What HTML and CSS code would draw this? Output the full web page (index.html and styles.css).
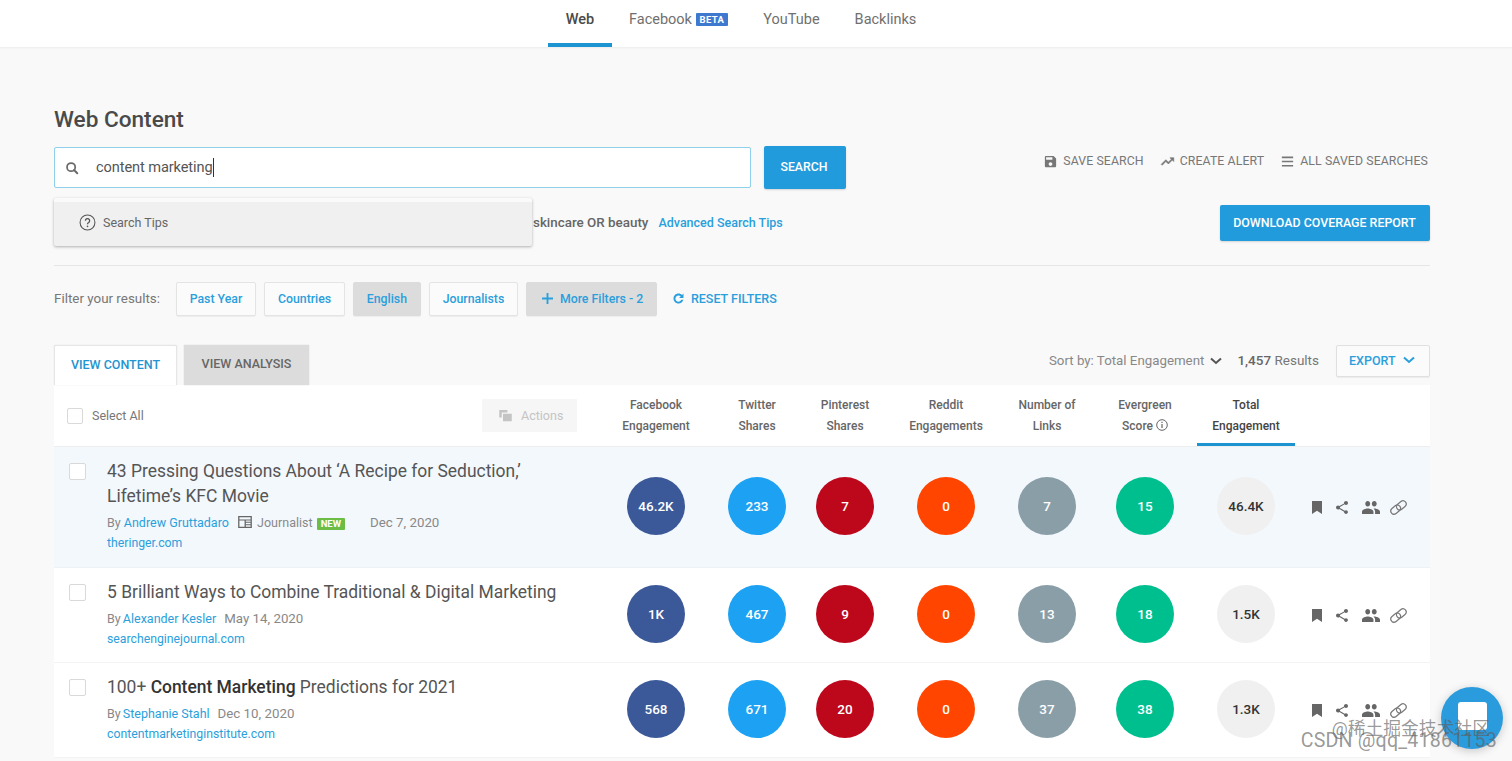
FILE: index.html
```html
<!DOCTYPE html>
<html lang="en">
<head>
<meta charset="utf-8">
<title>Web Content</title>
<link rel="stylesheet" href="styles.css">
</head>
<body>
<svg class="defs" width="0" height="0" aria-hidden="true">
  <symbol id="i-bookmark" viewBox="5 2 14 20" preserveAspectRatio="none"><path d="M5 2h14v20l-7-5-7 5z"/></symbol>
  <symbol id="i-share" viewBox="3 2 18 20" preserveAspectRatio="none"><path d="M18 16.08c-.76 0-1.44.3-1.96.77L8.91 12.7c.05-.23.09-.46.09-.7s-.04-.47-.09-.7l7.05-4.11c.54.5 1.25.81 2.04.81 1.66 0 3-1.34 3-3s-1.34-3-3-3-3 1.34-3 3c0 .24.04.47.09.7L8.04 9.81C7.5 9.31 6.79 9 6 9c-1.66 0-3 1.34-3 3s1.34 3 3 3c.79 0 1.5-.31 2.04-.81l7.12 4.16c-.05.21-.08.43-.08.65 0 1.61 1.31 2.92 2.92 2.92s2.92-1.31 2.92-2.92-1.31-2.92-2.92-2.92z"/></symbol>
  <symbol id="i-people" viewBox="1 5 22 14" preserveAspectRatio="none"><path d="M16 11c1.66 0 2.99-1.34 2.99-3S17.66 5 16 5c-1.66 0-3 1.34-3 3s1.34 3 3 3zm-8 0c1.66 0 2.99-1.34 2.99-3S9.66 5 8 5C6.34 5 5 6.34 5 8s1.34 3 3 3zm0 2c-2.33 0-7 1.17-7 3.5V19h14v-2.5c0-2.33-4.67-3.5-7-3.5zm8 0c-.29 0-.62.02-.97.05 1.16.84 1.97 1.97 1.97 3.45V19h6v-2.5c0-2.33-4.67-3.5-7-3.5z"/></symbol>
  <symbol id="i-link" viewBox="0 0 24 24"><g fill="none" stroke="currentColor" stroke-width="1.7"><rect x="0.5" y="10.5" width="15" height="9" rx="4.5" transform="rotate(-40 8 15)"/><rect x="8.5" y="4.5" width="15" height="9" rx="4.5" transform="rotate(-40 16 9)"/></g></symbol>
</svg>

<nav class="topnav">
  <a class="topnav-item is-active">Web</a>
  <a class="topnav-item">Facebook <span class="beta">BETA</span></a>
  <a class="topnav-item">YouTube</a>
  <a class="topnav-item">Backlinks</a>
</nav>

<main class="page">
  <h1 class="title">Web Content</h1>

  <section class="search-row">
    <div class="search-box">
      <svg class="search-icon" viewBox="0 0 24 24"><circle cx="10.5" cy="10.5" r="7" fill="none" stroke="currentColor" stroke-width="3"/><path d="M15.5 15.5 21 21" stroke="currentColor" stroke-width="3.4" stroke-linecap="round"/></svg>
      <span class="search-text">content marketing</span>
    </div>
    <a class="btn-primary btn-search">SEARCH</a>
    <div class="search-links">
      <a class="search-link"><svg class="ico-15" viewBox="0 0 24 24"><path d="M17 3H5c-1.11 0-2 .9-2 2v14c0 1.1.89 2 2 2h14c1.1 0 2-.9 2-2V7l-4-4zm-5 16c-1.66 0-3-1.34-3-3s1.34-3 3-3 3 1.34 3 3-1.34 3-3 3zm3-10H5V5h10v4z"/></svg>SAVE SEARCH</a>
      <a class="search-link"><svg class="ico-15" viewBox="0 0 24 24"><path d="M16 6l2.29 2.29-4.88 4.88-4-4L2 16.59 3.41 18l6-6 4 4 6.3-6.29L22 12V6z" stroke="currentColor"/></svg>CREATE ALERT</a>
      <a class="search-link"><svg class="ico-15" viewBox="0 0 24 24"><path d="M3 4h18v2.6H3zM3 10.7h18v2.6H3zM3 17.4h18V20H3z"/></svg>ALL SAVED SEARCHES</a>
    </div>
  </section>

  <section class="tips-row">
    <div class="tips-menu">
      <svg class="tips-icon" viewBox="0 0 24 24"><circle cx="12" cy="12" r="10.5" fill="none" stroke="currentColor" stroke-width="1.5"/><path d="M9 9.4a3 3 0 1 1 4.6 2.6c-1 .6-1.6 1.2-1.6 2.4" fill="none" stroke="currentColor" stroke-width="1.8"/><circle cx="12" cy="17.4" r="1.2" fill="currentColor"/></svg>
      <span>Search Tips</span>
    </div>
    <span class="tips-example">skincare OR beauty</span>
    <a class="tips-link">Advanced Search Tips</a>
    <a class="btn-primary btn-report">DOWNLOAD COVERAGE REPORT</a>
  </section>

  <section class="filters">
    <span class="filters-label">Filter your results:</span>
    <a class="chip">Past Year</a>
    <a class="chip">Countries</a>
    <a class="chip chip-on">English</a>
    <a class="chip">Journalists</a>
    <a class="chip chip-on chip-more"><svg class="plus" viewBox="0 0 12 12"><path d="M5 0h2v5h5v2H7v5H5V7H0V5h5z"/></svg>More Filters - 2</a>
    <a class="reset"><svg class="ico-15" viewBox="0 0 24 24"><path d="M17.65 6.35C16.2 4.9 14.21 4 12 4c-4.42 0-7.99 3.58-7.99 8s3.57 8 7.99 8c3.73 0 6.84-2.55 7.73-6h-3.2c-.82 1.6-2.5 3-4.53 3-2.76 0-5-2.24-5-5s2.24-5 5-5c1.4 0 2.6.6 3.5 1.5L13 11h7V4l-2.35 2.35z"/></svg>RESET FILTERS</a>
  </section>

  <section class="tabbar">
    <a class="tab tab-on">VIEW CONTENT</a>
    <a class="tab">VIEW ANALYSIS</a>
    <div class="sort">
      <span>Sort by: Total Engagement</span>
      <svg class="chev" viewBox="0 0 12 8"><path d="M1 1.5 6 6l5-4.5" fill="none" stroke="currentColor" stroke-width="2"/></svg>
      <span class="count"><b>1,457</b> Results</span>
      <a class="export">EXPORT<svg class="chev" viewBox="0 0 12 8"><path d="M1 1.5 6 6l5-4.5" fill="none" stroke="currentColor" stroke-width="2"/></svg></a>
    </div>
  </section>

  <section class="table">
    <div class="grid head">
      <div class="head-left">
        <span class="check"></span><span class="select-all">Select All</span>
        <span class="actions"><svg class="ico-15" viewBox="0 0 24 24"><path d="M2 3h13v4H6v8H2zM8 9h14v12H8z"/></svg>Actions</span>
      </div>
      <div class="hcell">Facebook<br>Engagement</div>
      <div class="hcell">Twitter<br>Shares</div>
      <div class="hcell">Pinterest<br>Shares</div>
      <div class="hcell">Reddit<br>Engagements</div>
      <div class="hcell">Number of<br>Links</div>
      <div class="hcell">Evergreen<br>Score <svg class="info" viewBox="0 0 12 12"><circle cx="6" cy="6" r="5.3" fill="none" stroke="currentColor"/><path d="M5.4 5h1.2v4H5.4zM5.4 2.8h1.2V4H5.4z"/></svg></div>
      <div class="hcell hcell-on">Total<br>Engagement</div>
    </div>

    <article class="grid row row-tall row-hi">
      <div class="main">
        <span class="check check-row"></span>
        <div>
          <h2 class="row-title">43 Pressing Questions About ‘A Recipe for Seduction,’<br>Lifetime’s KFC Movie</h2>
          <p class="meta">By <a class="lnk by">Andrew Gruttadaro</a>
            <svg class="news" viewBox="0 0 16 14"><path fill-rule="evenodd" d="M0 0h16v14H0zM1.5 1.5v2.5h13V1.5zM1.5 5.2v7.3h6V5.2zM9 5.2v1.6h5.5V5.2zM9 8v1.6h5.5V8zM9 10.8v1.7h5.5v-1.7z"/></svg>
            Journalist <span class="new">NEW</span><span class="date date-far">Dec 7, 2020</span></p>
          <a class="lnk domain">theringer.com</a>
        </div>
      </div>
      <div class="cell"><span class="dot fb">46.2K</span></div>
      <div class="cell"><span class="dot tw">233</span></div>
      <div class="cell"><span class="dot pi">7</span></div>
      <div class="cell"><span class="dot re">0</span></div>
      <div class="cell"><span class="dot li">7</span></div>
      <div class="cell"><span class="dot ev">15</span></div>
      <div class="cell cell-total"><span class="dot to">46.4K</span></div>
      <div class="tools"><svg class="t-mark"><use href="#i-bookmark"/></svg><svg class="t-share"><use href="#i-share"/></svg><svg class="t-people"><use href="#i-people"/></svg><svg class="t-link"><use href="#i-link"/></svg></div>
    </article>

    <article class="grid row">
      <div class="main">
        <span class="check check-row"></span>
        <div>
          <h2 class="row-title">5 Brilliant Ways to Combine Traditional &amp; Digital Marketing</h2>
          <p class="meta">By <a class="lnk">Alexander Kesler</a><span class="date">May 14, 2020</span></p>
          <a class="lnk domain">searchenginejournal.com</a>
        </div>
      </div>
      <div class="cell"><span class="dot fb">1K</span></div>
      <div class="cell"><span class="dot tw">467</span></div>
      <div class="cell"><span class="dot pi">9</span></div>
      <div class="cell"><span class="dot re">0</span></div>
      <div class="cell"><span class="dot li">13</span></div>
      <div class="cell"><span class="dot ev">18</span></div>
      <div class="cell cell-total"><span class="dot to">1.5K</span></div>
      <div class="tools"><svg class="t-mark"><use href="#i-bookmark"/></svg><svg class="t-share"><use href="#i-share"/></svg><svg class="t-people"><use href="#i-people"/></svg><svg class="t-link"><use href="#i-link"/></svg></div>
    </article>

    <article class="grid row">
      <div class="main">
        <span class="check check-row"></span>
        <div>
          <h2 class="row-title">100+ <b>Content Marketing</b> Predictions for 2021</h2>
          <p class="meta">By <a class="lnk">Stephanie Stahl</a><span class="date">Dec 10, 2020</span></p>
          <a class="lnk domain">contentmarketinginstitute.com</a>
        </div>
      </div>
      <div class="cell"><span class="dot fb">568</span></div>
      <div class="cell"><span class="dot tw">671</span></div>
      <div class="cell"><span class="dot pi">20</span></div>
      <div class="cell"><span class="dot re">0</span></div>
      <div class="cell"><span class="dot li">37</span></div>
      <div class="cell"><span class="dot ev">38</span></div>
      <div class="cell cell-total"><span class="dot to">1.3K</span></div>
      <div class="tools"><svg class="t-mark"><use href="#i-bookmark"/></svg><svg class="t-share"><use href="#i-share"/></svg><svg class="t-people"><use href="#i-people"/></svg><svg class="t-link"><use href="#i-link"/></svg></div>
    </article>
  </section>
</main>

<div class="chat"><span class="chat-box"></span></div>
<div class="watermark"><span class="wm-1">@稀土掘金技术社区</span><span class="wm-2">CSDN @qq_41861153</span></div>
</body>
</html>
```
FILE: styles.css
```css
* { box-sizing: border-box; }
html, body { margin: 0; height: 761px; overflow: hidden; }
body { background: #f9f9f9; font-family: Roboto, "Noto Sans CJK SC", sans-serif; color: #666; font-size: 13px; position: relative; }
a { color: inherit; text-decoration: none; }
.defs { position: absolute; }

.topnav { height: 47px; background: #fff; box-shadow: 0 1px 2px rgba(0,0,0,.06); display: flex; padding-left: 548px; font-size: 14.5px; color: #707070; }
.topnav-item { height: 47px; padding: 11px 0 0; margin-right: 35px; white-space: nowrap; }
.topnav-item.is-active { width: 64px; margin-right: 17px; text-align: center; color: #4a4a4a; font-weight: 500; border-bottom: 4px solid #1c94d2; }
.beta { display: inline-block; background: #3f78cf; color: #fff; font-size: 9.5px; font-weight: 700; line-height: 13px; padding: 0 4px; border-radius: 1px; vertical-align: 1px; letter-spacing: .35px; }

.page { padding: 0 82px 0 54px; }
.title { margin: 59px 0 0; font-size: 22.6px; line-height: 27px; font-weight: 500; color: #4a4a4a; }

.search-row { display: flex; align-items: center; margin-top: 13px; height: 43px; }
.search-box { width: 697px; height: 41px; background: #fff; border: 1px solid #8fd0ec; border-radius: 2px; display: flex; align-items: center; padding-left: 10px; font-size: 14.6px; color: #555; }
.search-icon { width: 14px; height: 14px; color: #6b6b6b; }
.search-text { margin-left: 17px; border-right: 1px solid #333; line-height: 19px; letter-spacing: -.1px; }
.btn-primary { background: #219bdb; color: #fff; font-weight: 500; border-radius: 2px; display: flex; align-items: center; justify-content: center; box-shadow: 0 1px 2px rgba(0,0,0,.15); }
.btn-search { width: 82px; height: 43px; margin-left: 13px; font-size: 12.3px; padding: 0 2px 1px 0; }
.search-links { margin-left: auto; margin-right: 2px; display: flex; gap: 16px; font-size: 12.3px; color: #777; height: 30px; margin-top: -13px; align-items: center; }
.search-link { display: flex; align-items: center; gap: 5px; white-space: nowrap; letter-spacing: .1px; }
.ico-15 { width: 15px; height: 15px; fill: currentColor; flex: none; }

.tips-row { position: relative; display: flex; align-items: center; height: 36px; margin-top: 16px; padding-left: 479px; font-weight: 500; font-size: 12.5px; }
.tips-menu { position: absolute; left: 0; top: -7px; width: 478px; height: 48px; background: #f0f0f0; border-top: 4px solid #fafafa; border-radius: 2px; box-shadow: 0 1px 3px rgba(0,0,0,.3); display: flex; align-items: center; padding: 0 0 3px 25px; gap: 7px; color: #666; font-weight: 400; font-size: 12.5px; }
.tips-icon { width: 17px; height: 17px; color: #555; }
.tips-example { color: #666; font-size: 13.4px; padding-bottom: 2px; }
.tips-link { color: #2a9fdc; margin-left: 10px; padding-bottom: 2px; }
.btn-report { margin-left: auto; width: 210px; height: 36px; font-size: 12.4px; padding: 0 1px 2px 0; }

.filters { display: flex; align-items: center; gap: 7.7px; margin-top: 24px; border-top: 1px solid #e6e6e6; padding-top: 16px; height: 51px; font-size: 12.3px; }
.filters-label { width: 114px; color: #777; font-size: 13.4px; padding-bottom: 2px; }
.chip { height: 34px; padding: 0 13px 1px; display: flex; align-items: center; background: #fbfbfb; border: 1px solid #e4e4e4; border-radius: 2px; color: #2a9fdc; font-weight: 500; box-shadow: 0 1px 1px rgba(0,0,0,.05); white-space: nowrap; }
.chip-on { background: #dcdcdc; border-color: #dcdcdc; }
.chip-more { gap: 7px; padding: 0 13px 1px 15px; }
.plus { width: 11px; height: 11px; fill: currentColor; }
.reset { display: flex; align-items: center; gap: 5px; color: #2a9fdc; font-weight: 500; margin-left: 6px; white-space: nowrap; font-size: 12.5px; padding-bottom: 1px; }

.tabbar { display: flex; align-items: flex-end; margin-top: 29px; height: 40px; gap: 7px; }
.tab { height: 40px; background: #dcdcdc; color: #666; font-weight: 500; font-size: 12.5px; display: flex; align-items: center; justify-content: center; width: 125px; box-shadow: 0 0 1px rgba(0,0,0,.2); padding-bottom: 3px; }
.tab-on { width: 123px; background: #fff; color: #2394d0; border: 1px solid #e6e6e6; border-bottom: 0; border-radius: 2px 2px 0 0; }
.sort { margin-left: auto; align-self: flex-start; height: 32px; display: flex; align-items: center; color: #888; font-size: 13.3px; white-space: nowrap; }
.sort > span { padding-bottom: 2px; }
.sort > .chev { margin-left: 6px; color: #555; }
.chev { width: 12px; height: 8px; }
.count { margin-left: 15px; color: #777; font-size: 13.5px; }
.count b { font-weight: 500; color: #666; }
.export { margin-left: 17px; width: 94px; height: 32px; padding: 0 0 2px 12px; border: 1px solid #e0e0e0; background: #fbfbfb; border-radius: 2px; color: #2a9fdc; font-weight: 500; font-size: 12.5px; display: flex; align-items: center; gap: 7px; box-shadow: 0 1px 1px rgba(0,0,0,.06); }
.export .chev { color: #2a9fdc; }

.table { background: #fff; }
.grid { display: grid; grid-template-columns: 539px 126px 76px 100px 102px 100px 96px 102px 1fr; }
.head { height: 62px; border-bottom: 1px solid #eee; }
.head-left { display: flex; align-items: center; padding-left: 13px; }
.check { width: 16px; height: 16px; flex: none; border: 1px solid #d9d9d9; background: #fff; border-radius: 2px; }
.select-all { margin-left: 9px; color: #777; font-size: 12.5px; }
.actions { margin-left: 338px; width: 95px; height: 33px; background: #f6f6f6; display: flex; align-items: center; justify-content: center; gap: 8px; padding-left: 3px; color: #c4c4c4; font-size: 12.5px; }
.hcell { text-align: center; font-size: 12px; line-height: 21px; color: #666; padding-top: 10px; font-weight: 500; }
.hcell-on { margin-left: 4px; color: #444; border-bottom: 3px solid #1c94d2; }
.info { width: 12px; height: 12px; fill: currentColor; vertical-align: -1px; }

.row { height: 95px; border-bottom: 1px solid #f3f3f3; align-items: start; }
.row-tall { height: 121px; }
.row-hi { background: #f3f8fd; border-bottom-color: #eef2f6; }
.main { display: flex; padding: 12px 0 0 15px; }
.check-row { width: 17px; height: 17px; margin-top: 4px; }
.main > div { margin-left: 21px; }
.row-title { margin: 0; font-size: 17.45px; line-height: 25px; font-weight: 400; color: #555; white-space: nowrap; }
.row-title b { font-weight: 500; color: #333; }
.meta { margin: 5px 0 0; font-size: 12.5px; line-height: 18px; color: #888; display: block; white-space: nowrap; }
.lnk { color: #2a9fdc; }
.meta .lnk { margin-left: -1px; }
.meta .by { margin-left: 0; }
.news { width: 14px; height: 12px; fill: #666; margin: 0 2px 0 6px; vertical-align: -1px; }
.new { display: inline-block; background: #6cbd45; color: #fff; font-size: 9.5px; font-weight: 700; line-height: 12px; padding: 0 4px; border-radius: 1px; vertical-align: 0; margin-left: 1px; }
.date { margin-left: 8px; font-size: 13.3px; }
.date-far { margin-left: 25px; }
.domain { display: block; margin-top: 2px; font-size: 12.25px; line-height: 18px; }

.cell { display: flex; justify-content: center; padding-top: 17px; }
.row-tall .cell { padding-top: 30px; }
.cell-total { padding-left: 4px; }
.dot { width: 58px; height: 58px; border-radius: 50%; display: flex; align-items: center; justify-content: center; color: #fff; font-weight: 500; font-size: 13.5px; padding-bottom: 1px; }
.fb { background: #3b5998; }
.tw { background: #1da1f2; }
.pi { background: #bd081c; }
.re { background: #ff4500; }
.li { background: #8a9ea8; }
.ev { background: #00bf8f; }
.to { background: #f0f0f0; color: #333; }

.tools { display: flex; align-items: center; height: 58px; margin-top: 18px; padding-left: 17px; }
.row-tall .tools { margin-top: 31px; }
.tools svg { fill: #666; flex: none; }
.t-mark { width: 10px; height: 13px; }
.t-share { width: 12px; height: 13px; margin-left: 14px; }
.t-people { width: 18px; height: 13px; margin-left: 14px; }
.t-link { width: 17px; height: 17px; margin-left: 10px; color: #777; }

.chat { position: absolute; left: 1441px; top: 687px; width: 62px; height: 62px; border-radius: 50%; background: #2a9bdc; box-shadow: 0 2px 10px rgba(0,0,0,.2); display: flex; justify-content: center; padding-top: 15px; }
.chat-box { width: 29px; height: 28px; background: #fff; border-radius: 3px; }
.watermark { position: absolute; left: 1281px; top: 720px; width: 220px; display: flex; flex-direction: column; align-items: flex-end; color: rgba(95,95,95,.65); pointer-events: none; white-space: nowrap; }
.wm-1 { font-size: 17.8px; line-height: 18px; margin-right: 11px; }
.wm-2 { font-size: 19.6px; line-height: 20px; margin-top: -7px; margin-right: 4px; letter-spacing: .2px; }
```
